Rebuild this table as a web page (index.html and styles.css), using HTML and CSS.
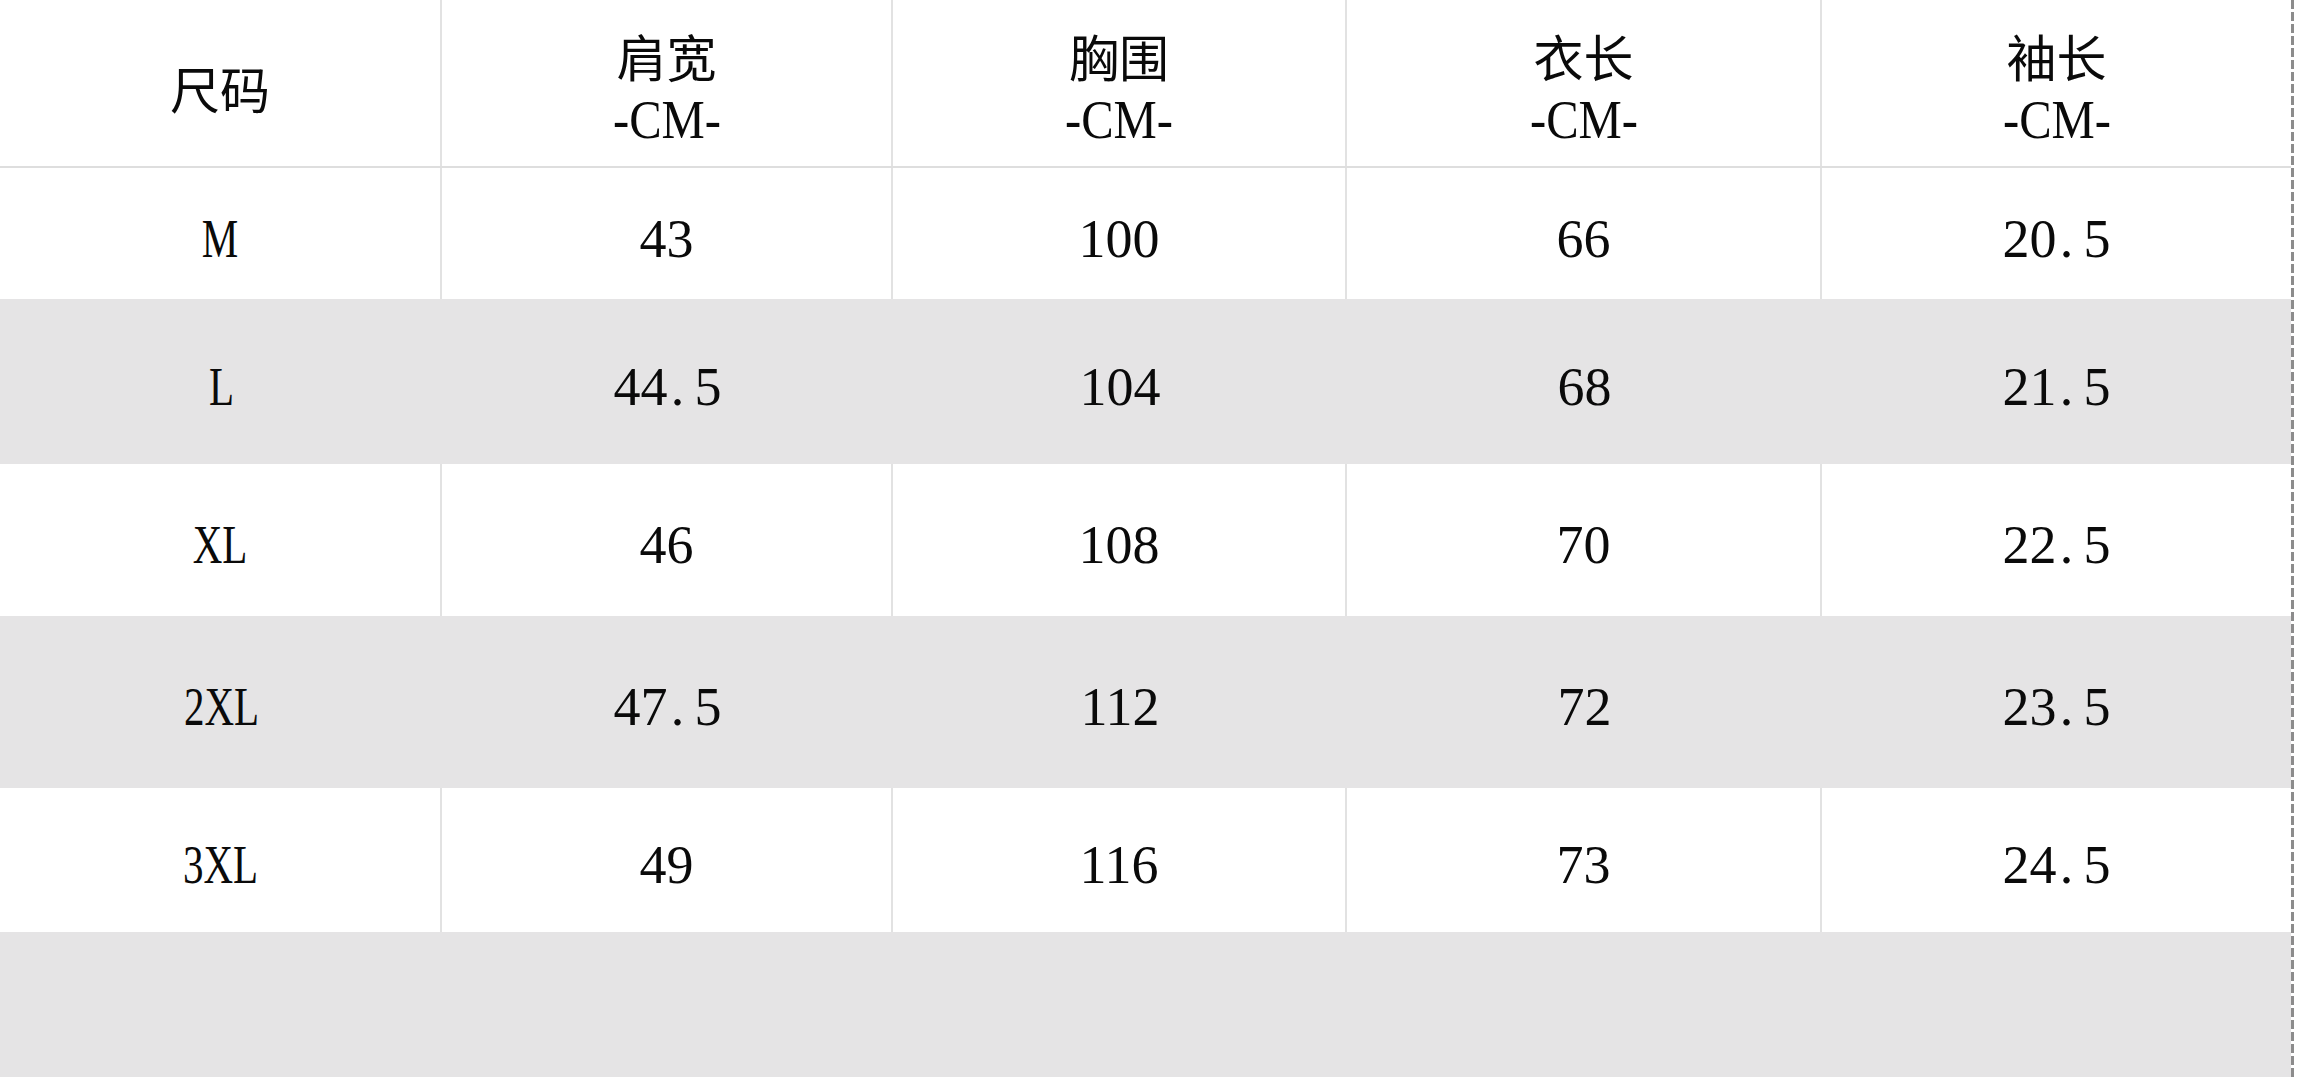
FILE: index.html
```html
<!DOCTYPE html>
<html lang="zh-CN">
<head>
<meta charset="utf-8">
<title>尺码表</title>
<link rel="stylesheet" href="styles.css">
</head>
<body>
<div class="sheet">
  <div class="table">
    <div class="row head">
      <div class="cell"><span class="cjk">尺码</span></div>
      <div class="cell"><span class="cjk">肩宽</span><span class="num unit">-CM-</span></div>
      <div class="cell"><span class="cjk">胸围</span><span class="num unit">-CM-</span></div>
      <div class="cell"><span class="cjk">衣长</span><span class="num unit">-CM-</span></div>
      <div class="cell"><span class="cjk">袖长</span><span class="num unit">-CM-</span></div>
    </div>
    <div class="row data white r-m">
      <div class="cell"><span class="num size">M</span></div>
      <div class="cell"><span class="num">43</span></div>
      <div class="cell"><span class="num">100</span></div>
      <div class="cell"><span class="num">66</span></div>
      <div class="cell"><span class="num">20<span class="dot">.</span>5</span></div>
    </div>
    <div class="row data gray r-l">
      <div class="cell"><span class="num size">L</span></div>
      <div class="cell"><span class="num">44<span class="dot">.</span>5</span></div>
      <div class="cell"><span class="num">104</span></div>
      <div class="cell"><span class="num">68</span></div>
      <div class="cell"><span class="num">21<span class="dot">.</span>5</span></div>
    </div>
    <div class="row data white r-xl">
      <div class="cell"><span class="num size">XL</span></div>
      <div class="cell"><span class="num">46</span></div>
      <div class="cell"><span class="num">108</span></div>
      <div class="cell"><span class="num">70</span></div>
      <div class="cell"><span class="num">22<span class="dot">.</span>5</span></div>
    </div>
    <div class="row data gray r-2xl">
      <div class="cell"><span class="num size">2XL</span></div>
      <div class="cell"><span class="num">47<span class="dot">.</span>5</span></div>
      <div class="cell"><span class="num">112</span></div>
      <div class="cell"><span class="num">72</span></div>
      <div class="cell"><span class="num">23<span class="dot">.</span>5</span></div>
    </div>
    <div class="row data white r-3xl">
      <div class="cell"><span class="num size">3XL</span></div>
      <div class="cell"><span class="num">49</span></div>
      <div class="cell"><span class="num">116</span></div>
      <div class="cell"><span class="num">73</span></div>
      <div class="cell"><span class="num">24<span class="dot">.</span>5</span></div>
    </div>
    <div class="row data gray r-empty">
      <div class="cell"></div>
      <div class="cell"></div>
      <div class="cell"></div>
      <div class="cell"></div>
      <div class="cell"></div>
    </div>
  </div>
  <div class="edge"></div>
</div>
</body>
</html>
```

FILE: styles.css
```css
html, body {
  margin: 0;
  padding: 0;
  background: #ffffff;
}

body {
  width: 2301px;
  height: 1080px;
  overflow: hidden;
  color: #0a0a0a;
  font-family: "Noto Sans CJK SC", "Liberation Sans", sans-serif;
}

.sheet {
  display: flex;
  align-items: stretch;
  height: 1080px;
}

.table {
  width: 2291px;
  display: flex;
  flex-direction: column;
}

.edge {
  width: 3px;
  height: 1080px;
  background: repeating-linear-gradient(to bottom, #8c8c8c 0 9px, transparent 9px 12px);
}

.row {
  display: grid;
  grid-template-columns: 442px 451px 454px 475px 469px;
}

.cell {
  box-sizing: border-box;
  display: flex;
  flex-direction: column;
  align-items: center;
  justify-content: center;
}

.head {
  height: 168px;
  box-sizing: border-box;
  border-bottom: 2px solid #dedede;
  background: #ffffff;
}

.head .cell {
  padding-top: 8px;
}

.white {
  background: #ffffff;
}

.gray {
  background: #e5e4e5;
}

.head .cell:not(:last-child),
.white .cell:not(:last-child) {
  border-right: 2px solid #e2e2e2;
}

.data .cell {
  padding-top: 10px;
}

.cjk {
  font-family: "Noto Sans CJK SC", sans-serif;
  font-size: 50px;
  line-height: 66px;
  font-weight: 400;
}

.num {
  display: inline-block;
  font-family: "Liberation Serif", "DejaVu Serif", serif;
  font-size: 54px;
  line-height: 66px;
  white-space: pre;
}

.dot {
  display: inline-block;
  width: 0.5em;
  padding-left: 0.06em;
  box-sizing: border-box;
  text-align: left;
}

.unit {
  line-height: 64px;
  transform: scaleX(0.9);
}

.size {
  transform: scaleX(0.76);
}

.r-m { height: 131px; }
.r-l { height: 165px; }
.r-xl { height: 152px; }
.r-2xl { height: 172px; }
.r-3xl { height: 144px; }
.r-empty { height: 145px; }
```
